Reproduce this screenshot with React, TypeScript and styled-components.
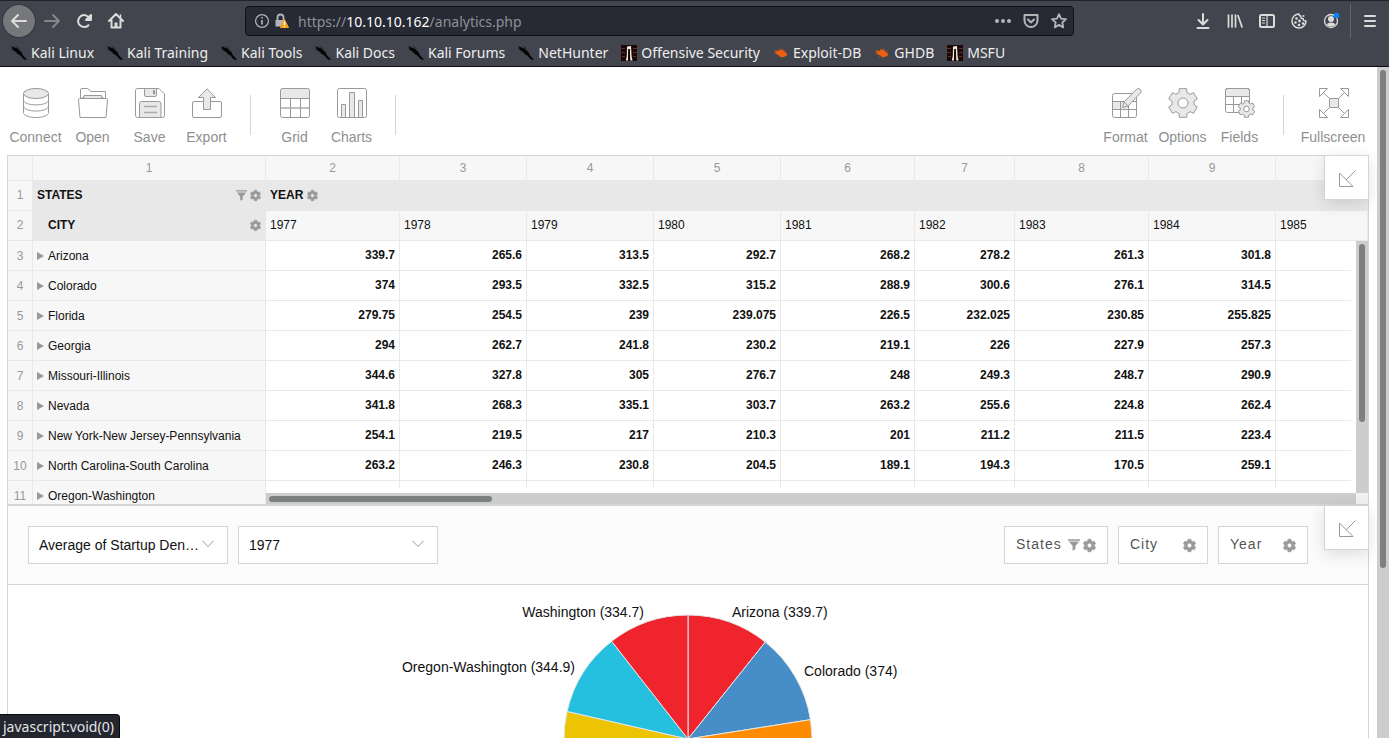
import React from "react";
import styled, { createGlobalStyle, css } from "styled-components";

const GlobalStyle = createGlobalStyle`
  *, *::before, *::after { box-sizing: border-box; }
  body { margin: 0; background: #fff; font-family: "Liberation Sans", Arial, sans-serif; color: #111; }
  button, select { font: inherit; color: inherit; margin: 0; padding: 0; background: none; border: 0; cursor: pointer; }
  svg { display: block; flex: none; overflow: visible; }
`;

/* ---------- browser window ---------- */

const Window = styled.div`
  display: flex;
  flex-direction: column;
  height: 100vh;
  overflow: hidden;
`;

const Chrome = styled.header`
  flex: none;
  height: 67px;
  background: #42454d;
  border-top: 1px solid #22232b;
  border-bottom: 1px solid #0c0c0d;
  color: #eee;
  font-family: "Noto Sans", sans-serif;
  font-size: 14px;
`;

const NavBar = styled.div`
  display: flex;
  align-items: center;
  height: 40px;
`;

const IconButton = styled.button<{ $dim?: boolean }>`
  display: flex;
  align-items: center;
  justify-content: center;
  width: 32px;
  height: 32px;
  color: ${(p) => (p.$dim ? "#85878c" : "#dcdcdb")};
`;

const BackButton = styled(IconButton)`
  margin: 0 1px 0 3px;
  border-radius: 50%;
  background: #75777b;
  box-shadow: 0 0 0 1px #33353b;
`;

const UrlBar = styled.div`
  display: flex;
  align-items: center;
  flex: 1;
  height: 30px;
  margin: 0 113px;
  padding: 0 0 0 8px;
  background: #272934;
  border: 1px solid #0f1015;
  border-radius: 4px;
  color: #b4b5b8;
`;

const UrlText = styled.div`
  flex: 1;
  margin-left: 12px;
  color: #8f9095;
  white-space: nowrap;
  outline: none;
  strong { color: #fff; font-weight: 400; }
`;

const UrlAction = styled(IconButton)`
  width: 28px;
  color: #b4b5b8;
`;

const NavActions = styled.div`
  display: flex;
  align-items: center;
`;

const MenuCell = styled.div`
  height: 34px;
  margin-left: 3px;
  padding: 1px 3px 0;
  border-left: 1px solid #63656b;
`;

const Bookmarks = styled.nav`
  display: flex;
  align-items: center;
  gap: 13px;
  height: 24px;
  padding-left: 11px;
`;

const Bookmark = styled.a`
  display: flex;
  align-items: center;
  gap: 4px;
  color: #eee;
  text-decoration: none;
  white-space: nowrap;
  line-height: 20px;
`;

const Status = styled.div`
  position: fixed;
  left: 0;
  bottom: 0;
  height: 24px;
  padding: 0 5px 0 3px;
  background: #23252f;
  border: 1px solid #0a0a0c;
  border-width: 1px 1px 0 0;
  border-top-right-radius: 4px;
  color: #e4e4e6;
  font: 14px/24px "Noto Sans", sans-serif;
`;

const Viewport = styled.div`
  display: flex;
  flex: 1;
  min-height: 0;
`;

const Page = styled.main`
  flex: 1;
  min-width: 0;
  overflow: hidden;
  padding: 0 8px 0 7px;
`;

const PageScroll = styled.div`
  flex: none;
  width: 12px;
  padding: 3px;
  background: #cdcdcd;
`;

const Thumb = styled.div<{ $w: string; $h: string }>`
  width: ${(p) => p.$w};
  height: ${(p) => p.$h};
  border-radius: 3px;
  background: #7d8080;
`;

/* ---------- pivot toolbar ---------- */

const Toolbar = styled.div`
  display: flex;
  justify-content: space-between;
  height: 88px;
  padding: 21px 2px 0 0;
`;

const ToolGroup = styled.div`
  display: flex;
`;

const Tool = styled.button<{ $wide?: boolean }>`
  display: flex;
  flex-direction: column;
  align-items: center;
  gap: 11px;
  width: ${(p) => (p.$wide ? 68 : 57)}px;
  height: 60px;
  color: #8f8f8f;
  font-size: 14px;
  line-height: 16px;
`;

const Divider = styled.div`
  width: 1px;
  height: 40px;
  margin: 7px 15px 0;
  background: #d5d5d5;
`;

/* ---------- pivot grid ---------- */

const Panel = styled.section`
  position: relative;
  border: 1px solid #d5d5d5;
`;

const GridPanel = styled(Panel)`
  height: 350px;
`;

const GridClip = styled.div`
  height: 100%;
  overflow: hidden;
`;

const Table = styled.table`
  width: 100%;
  table-layout: fixed;
  border-collapse: separate;
  border-spacing: 0;
  font-size: 12px;
  line-height: 14px;
`;

const cell = css`
  height: 30px;
  padding: 0 4px 2px;
  border: solid #e9e9e9;
  border-width: 0 1px 1px 0;
  font-weight: 400;
  text-align: left;
  white-space: nowrap;
`;

const ColNumber = styled.th`
  ${cell}
  height: 25px;
  padding: 0;
  background: #f7f7f7;
  color: #999;
  text-align: center;
`;

const RowNumber = styled.th`
  ${cell}
  padding: 0;
  background: #f7f7f7;
  color: #999;
  text-align: center;
  thead & { padding-bottom: 2px; }
`;

const FieldHead = styled.th`
  ${cell}
  background: #e8e8e8;
  border-color: #e8e8e8;
  font-weight: 700;
`;

const FieldRow = styled.div<{ $indent?: boolean; $spread?: boolean }>`
  display: flex;
  align-items: center;
  justify-content: ${(p) => (p.$spread ? "space-between" : "flex-start")};
  gap: 4px;
  padding-left: ${(p) => (p.$indent ? 11 : 0)}px;
`;

const IconPair = styled.span`
  display: flex;
  align-items: center;
  gap: 3px;
  padding-top: 2px;
  color: #999;
  button { display: block; }
`;

const YearHead = styled.th`
  ${cell}
  background: #f7f7f7;
`;

const StateHead = styled.th`
  ${cell}
  padding: 1px 4px 0;
  background: #f7f7f7;
`;

const Expand = styled.button`
  width: 7px;
  height: 8px;
  margin-right: 4px;
  background: #999;
  clip-path: polygon(0 0, 100% 50%, 0 100%);
`;

const Value = styled.td`
  ${cell}
  background: #fff;
  font-weight: 700;
  text-align: right;
`;

const VScroll = styled.div`
  position: absolute;
  top: 85px;
  right: 0;
  bottom: 11px;
  width: 17px;
  padding: 3px;
  border-left: 5px solid #fff;
  background: #cdcdcd;
`;

const HScroll = styled.div`
  position: absolute;
  left: 258px;
  right: 0;
  bottom: 0;
  height: 16px;
  padding: 3px;
  border-top: 5px solid #fff;
  background: linear-gradient(to left, #f2f1ef 12px, #cdcdcd 12px);
`;

const Minimize = styled.button`
  position: absolute;
  top: -1px;
  right: -1px;
  display: flex;
  align-items: center;
  justify-content: center;
  width: 45px;
  height: 45px;
  padding: 2px 0 0 2px;
  background: #fff;
  border: 1px solid #d5d5d5;
  box-shadow: 0 4px 16px rgba(0, 0, 0, 0.12);
`;

/* ---------- chart ---------- */

const ChartBar = styled.div`
  display: flex;
  justify-content: space-between;
  height: 79px;
  padding: 20px 60px 20px 20px;
  background: #fbfbfb;
  border-bottom: 1px solid #d5d5d5;
`;

const Controls = styled.div`
  display: flex;
  gap: 10px;
`;

const SelectBox = styled.label`
  position: relative;
  width: 200px;
  height: 38px;
  svg { position: absolute; right: 14px; top: 14px; pointer-events: none; }
`;

const Select = styled.select`
  appearance: none;
  width: 100%;
  height: 100%;
  padding: 0 25px 0 10px;
  border: 1px solid #d5d5d5;
  background: #fff;
  font-size: 14px;
  text-overflow: ellipsis;
  white-space: nowrap;
  overflow: hidden;
`;

const FieldButton = styled.button<{ $w: number }>`
  display: flex;
  align-items: center;
  justify-content: space-between;
  width: ${(p) => p.$w}px;
  height: 38px;
  padding: 0 11px 2px;
  background: #fff;
  border: 1px solid #d5d5d5;
  color: #555;
  font-size: 14px;
  letter-spacing: 1px;
`;

const ChartSvg = styled.svg`
  margin: 0 auto;
  font-size: 14px;
`;

/* ---------- icons ---------- */

const Nav = ({ children, w = 16 }: { children: React.ReactNode; w?: number }) => (
  <svg width={w} height={w} viewBox="0 0 16 16" fill="none" stroke="currentColor" strokeWidth="2" strokeLinecap="round" strokeLinejoin="round">
    {children}
  </svg>
);

const gearPath = (cx: number, cy: number, outer: number, inner: number, hole: number) => {
  const pts: string[] = [];
  for (let i = 0; i < 6; i++) {
    const mid = (i * 60 - 90) * (Math.PI / 180);
    [[-0.36, inner], [-0.25, outer], [0.25, outer], [0.36, inner]].forEach(([a, r]) => {
      pts.push(`${(cx + r * Math.cos(mid + a)).toFixed(2)} ${(cy + r * Math.sin(mid + a)).toFixed(2)}`);
    });
  }
  return `M${pts.join("L")}ZM${cx + hole} ${cy}a${hole} ${hole} 0 1 0 ${-2 * hole} 0a${hole} ${hole} 0 1 0 ${2 * hole} 0Z`;
};

const Gear = ({ size = 11 }: { size?: number }) => (
  <svg width={size} height={size} viewBox="0 0 12 12">
    <path d={gearPath(6, 6, 6, 4.6, 2)} fill="currentColor" stroke="currentColor" strokeWidth=".4" strokeLinejoin="round" fillRule="evenodd" />
  </svg>
);

const Filter = ({ size = 11 }: { size?: number }) => (
  <svg width={size} height={size} viewBox="0 0 11 11" fill="currentColor">
    <path d="M0 .3h11v1.3H0zM.8 2.4h9.4L6.8 6.4v3L4.2 10.8V6.4z" />
  </svg>
);

const KaliIcon = () => (
  <svg width="16" height="16" viewBox="0 0 16 16">
    <path d="M0 1l3 1.2L4.500 3 7 3.500l1.500 2L10.500 7l1.300 3L14 12.500l2 2-1.600.6-2.600-1.600L9.500 10.500 7 9.200 5 7 2.600 5.500 0 3.500l1.800.3z" fill="#050505" />
    <path d="M4 1.500l3 1.500M5 .8l4 2.800" stroke="#222" strokeWidth=".5" />
  </svg>
);

const OffsecIcon = () => (
  <svg width="16" height="16" viewBox="0 0 16 16">
    <path d="M0 0h16v16H0z" fill="#1a0706" />
    <path d="M0 3h4v1H0zM0 7h4v1H0zM1 11h3v1H1zM12 3h4v1h-4zM12 7h4v1h-4zM12 11h3v1h-3z" fill="#57302c" />
    <path d="M6 1.500l4-.5.6 10 .9 4.500H9.300L8.800 4H7.300L7 15.500H4.800l1-4.500z" fill="#eee8e0" />
    <path d="M7.500 4h1.200v11H7.200z" fill="#130505" />
  </svg>
);

const BugIcon = () => (
  <svg width="16" height="16" viewBox="0 0 16 16">
    <path d="M2 5l3 1 2-1.500 3 .5 2 2 2 1.500-.3 2-2.700 1.500L8 12 5 10 3 9z" fill="#ec5f12" />
    <path d="M1 5.500l4 1.500M.5 8l4 .5M6 3.500l1 2M9 3l1 2.500M5 12l2-2M8 13.500l1-2M12 5l1.500 1" stroke="#c4551c" strokeWidth=".6" />
  </svg>
);

const ToolSvg = ({ children }: { children: React.ReactNode }) => (
  <svg width="31" height="30" viewBox="-1 0 31 30" fill="none" stroke="#999" strokeLinejoin="round">
    {children}
  </svg>
);

const SHADE = "#e8e8e8";

const toolIcons: Record<string, React.ReactNode> = {
  Connect: (
    <>
      <path d="M2.500 5.500V24.500C2.500 31.200 27.500 31.200 27.500 24.500V5.500M2.500 12C2.500 18.500 27.500 18.500 27.500 12M2.500 18C2.500 24.700 27.500 24.700 27.500 18" fill="#fff" />
      <ellipse cx="15" cy="5.500" rx="12.500" ry="5" fill={SHADE} />
    </>
  ),
  Open: (
    <>
      <path d="M2.500 11V2q0-1.500 1.500-1.500H9.500L13 3.500H27.500V11" />
      <path d="M4.500 11V9.500H6V7.500H23.500V9.500H25V11" fill={SHADE} />
      <path d="M.5 11.500q0-1 1-1h27q1 0 1 1L28 29.500H2z" fill="#fff" />
    </>
  ),
  Save: (
    <>
      <path d="M2.500.5H24L29.500 6V27.500a2 2 0 0 1-2 2h-25a2 2 0 0 1-2-2v-25a2 2 0 0 1 2-2z" />
      <path d="M9.500.5V7q0 1.500 1.500 1.500h9q1.500 0 1.500-1.500V.5z" fill={SHADE} />
      <path d="M18.500 2.500V6h1V2.500z" />
      <path d="M4.500 29.500V15.500q0-2 2-2H24q2 0 2 2v14z" fill={SHADE} />
      <path d="M9 18.500H22M9 24.500H22" strokeWidth="1.500" stroke="#aaa" />
    </>
  ),
  Export: (
    <>
      <path d="M2 13.500H28q1.500 0 1.500 1.500V28q0 1.500-1.500 1.500H2Q.5 29.500.5 28V15q0-1.500 1.500-1.500z" />
      <path d="M15 .8L23.500 9.500H18.500V21.500H11.500V9.500H6.500z" fill={SHADE} />
    </>
  ),
  Grid: (
    <>
      <path d="M.5 10V2.500q0-2 2-2h25q2 0 2 2V10z" fill={SHADE} stroke="none" />
      <path d="M.5 10.500h29M10.500 10.500v19M20.500 10.500v19" />
      <path d="M.5 20h29" strokeWidth="1.500" stroke="#aaa" />
      <rect x=".5" y=".5" width="29" height="29" rx="2" />
    </>
  ),
  Charts: (
    <>
      <path d="M4.500 29.500v-13h4v13M12.500 29.500v-25h5v25M21.500 29.500v-17h4v17" fill={SHADE} />
      <rect x=".5" y=".5" width="29" height="29" rx="2" />
    </>
  ),
  Format: (
    <>
      <path d="M1.500 13.500h16v8h-16z" fill={SHADE} />
      <rect x="1.500" y="5.500" width="24" height="24" rx="2" />
      <path d="M1.500 13.500h24M1.500 21.500h24M9.500 13.500v16M17.500 13.500v16" />
      <path d="M11.500 19.500L13 14 25.500 1.400q2-1.800 3.800 0t0 3.800L17 18z" fill={SHADE} />
      <path d="M13 14l4 4" />
    </>
  ),
  Options: <path d={gearPath(15, 15, 14.8, 11.2, 5)} fill={SHADE} fillRule="evenodd" />,
  Fields: (
    <>
      <path d="M.5 8.500v-6q0-2 2-2h20q2 0 2 2v6z" fill={SHADE} />
      <rect x=".5" y=".5" width="24" height="24" rx="2" />
      <path d="M.5 8.500h24M.5 16.500h24M8.500 8.500v16M16.500 8.500v16" />
      <circle cx="21.500" cy="21" r="7" fill="#fff" stroke="none" />
      <path d={gearPath(21.5, 21, 8.5, 6.4, 2.8)} fill={SHADE} fillRule="evenodd" />
    </>
  ),
  Fullscreen: (
    <>
      <path d="M4.500 4.500L10.500 10.500M25.500 4.500L19.500 10.500M4.500 25.500l6-6M25.500 25.500l-6-6" />
      <path d="M.5.5h8l-8 8zM29.500.5h-8l8 8zM.5 29.500h8l-8-8zM29.500 29.500h-8l8-8z" fill="#fff" />
      <path d="M10.500 10.500h9v9h-9z" fill={SHADE} />
    </>
  ),
};

const MinimizeIcon = () => (
  <svg width="17" height="17" viewBox="0 0 17 17" fill="none" stroke="#999">
    <path d="M.5 3V16.500H14zM7.300 9.700L16.500 .5" />
  </svg>
);

const Chevron = () => (
  <svg width="12" height="8" viewBox="0 0 12 8" fill="none" stroke="#999">
    <path d="M.5 .8L6 6.500 11.500 .8" />
  </svg>
);

/* ---------- data ---------- */

const bookmarks: [string, React.FC][] = [
  ["Kali Linux", KaliIcon],
  ["Kali Training", KaliIcon],
  ["Kali Tools", KaliIcon],
  ["Kali Docs", KaliIcon],
  ["Kali Forums", KaliIcon],
  ["NetHunter", KaliIcon],
  ["Offensive Security", OffsecIcon],
  ["Exploit-DB", BugIcon],
  ["GHDB", BugIcon],
  ["MSFU", OffsecIcon],
];

const columnWidths = [25, 233, 134, 127, 127, 127, 134, 100, 134, 127];
const years = [1977, 1978, 1979, 1980, 1981, 1982, 1983, 1984, 1985];

const rows: [string, number[]][] = [
  ["Arizona", [339.7, 265.6, 313.5, 292.7, 268.2, 278.2, 261.3, 301.8]],
  ["Colorado", [374, 293.5, 332.5, 315.2, 288.9, 300.6, 276.1, 314.5]],
  ["Florida", [279.75, 254.5, 239, 239.075, 226.5, 232.025, 230.85, 255.825]],
  ["Georgia", [294, 262.7, 241.8, 230.2, 219.1, 226, 227.9, 257.3]],
  ["Missouri-Illinois", [344.6, 327.8, 305, 276.7, 248, 249.3, 248.7, 290.9]],
  ["Nevada", [341.8, 268.3, 335.1, 303.7, 263.2, 255.6, 224.8, 262.4]],
  ["New York-New Jersey-Pennsylvania", [254.1, 219.5, 217, 210.3, 201, 211.2, 211.5, 223.4]],
  ["North Carolina-South Carolina", [263.2, 246.3, 230.8, 204.5, 189.1, 194.3, 170.5, 259.1]],
  ["Oregon-Washington", []],
];

const slices: [number, string][] = [
  [339.7, "#ef242d"],
  [374, "#478ec9"],
  [279.75, "#ff8c00"],
  [294, "#8bc34a"],
  [344.6, "#9c5bb5"],
  [341.8, "#3aa99f"],
  [254.1, "#e0679b"],
  [263.2, "#edc404"],
  [344.9, "#25c0df"],
  [334.7, "#ef242d"],
];

const Pie = () => {
  const total = slices.reduce((sum, [v]) => sum + v, 0);
  const cx = 280;
  const cy = 154;
  const r = 124;
  let angle = 0;
  return (
    <ChartSvg width="560" height="300" viewBox="0 0 560 300" role="img" aria-label="Average of Startup Density by state">
      {slices.map(([value, color], i) => {
        const start = angle;
        angle += (value / total) * Math.PI * 2;
        const at = (a: number) => `${cx + r * Math.sin(a)} ${cy - r * Math.cos(a)}`;
        return <path key={i} d={`M${cx} ${cy}L${at(start)}A${r} ${r} 0 0 1 ${at(angle)}Z`} fill={color} stroke="#e6e6e6" strokeWidth="1" />;
      })}
      <g fill="#111">
        <text x="236" y="32" textAnchor="end">Washington (334.7)</text>
        <text x="324" y="32">Arizona (339.7)</text>
        <text x="167" y="87" textAnchor="end">Oregon-Washington (344.9)</text>
        <text x="396" y="91">Colorado (374)</text>
      </g>
    </ChartSvg>
  );
};

const Tools = ({ names }: { names: string[] }) => (
  <>
    {names.map((name) => (
      <Tool key={name} $wide={name === "Fullscreen"}>
        <ToolSvg>{toolIcons[name]}</ToolSvg>
        {name}
      </Tool>
    ))}
  </>
);

export default function App() {
  return (
    <Window>
      <GlobalStyle />
      <Chrome>
        <NavBar>
          <BackButton aria-label="Back">
            <Nav><path d="M15 8H1.500M7 2L1 8l6 6" /></Nav>
          </BackButton>
          <IconButton $dim aria-label="Forward">
            <Nav><path d="M1 8h13.500M9 2l6 6-6 6" /></Nav>
          </IconButton>
          <IconButton aria-label="Reload">
            <Nav>
              <path d="M13.500 5.500A6 6 0 1 0 12.500 12.200" />
              <path d="M15 2v5h-5z" fill="currentColor" />
            </Nav>
          </IconButton>
          <IconButton aria-label="Home">
            <Nav>
              <path d="M1 8l7-7 7 7M3.500 7v7.500h9V7" />
              <path d="M6.500 9.500h3v5h-3z" fill="currentColor" stroke="none" />
              <path d="M12.500 2v3" strokeWidth="1.500" />
            </Nav>
          </IconButton>
          <UrlBar>
            <svg width="16" height="16" viewBox="0 0 16 16" fill="none" stroke="currentColor" strokeWidth="1.200">
              <circle cx="8" cy="8" r="6.400" />
              <path d="M8 7v4.500M8 4v1.600" strokeWidth="1.600" />
            </svg>
            <svg width="16" height="16" viewBox="0 0 16 16">
              <g transform="translate(5 0)">
                <path d="M2.500 7V4.500a3 3 0 0 1 6 0V7" fill="none" stroke="currentColor" strokeWidth="1.800" />
                <path d="M.5 7h9v6.500h-9z" fill="currentColor" />
                <path d="M9.500 6.500L13.500 14.500H5.500z" fill="#f9a01b" stroke="#f9a01b" strokeLinejoin="round" />
                <path d="M9.500 8.500v3.500M9.500 13v1.200" stroke="#fff" strokeWidth="1.300" />
              </g>
            </svg>
            <UrlText role="textbox" aria-label="Address" contentEditable suppressContentEditableWarning spellCheck={false}>
              https://<strong>10.10.10.162</strong>/analytics.php
            </UrlText>
            <UrlAction aria-label="Page actions">
              <Nav>
                <g fill="currentColor" stroke="none"><circle cx="2" cy="8" r="2" /><circle cx="8" cy="8" r="2" /><circle cx="14" cy="8" r="2" /></g>
              </Nav>
            </UrlAction>
            <UrlAction aria-label="Save to Pocket">
              <Nav><path d="M1.500 2h13v5.500a6.500 6.500 0 0 1-13 0z" /><path d="M5 6.500l3 3 3-3" /></Nav>
            </UrlAction>
            <UrlAction aria-label="Bookmark this page">
              <Nav><path d="M8 1.200l2 4.500 5 .5-3.700 3.300 1 4.900L8 11.900l-4.300 2.500 1-4.900L1 6.200l5-.5z" strokeWidth="1.800" /></Nav>
            </UrlAction>
          </UrlBar>
          <NavActions>
            <IconButton aria-label="Downloads">
              <Nav><path d="M8 1v10M3.500 7L8 11.500 12.500 7M2.500 15h11" /></Nav>
            </IconButton>
            <IconButton aria-label="Library">
              <Nav><path d="M1.500 2v12M5 2v12M8.500 2v12" strokeWidth="1.700" /><path d="M11 2.500L15 14" strokeWidth="1.700" /></Nav>
            </IconButton>
            <IconButton aria-label="Sidebars">
              <Nav><rect x="1" y="2" width="14" height="12" rx="1.500" /><path d="M8 2v12M3.500 5h2M3.500 7.500h2M3.500 10h2" strokeWidth="1.200" /></Nav>
            </IconButton>
            <IconButton aria-label="Cookie editor">
              <Nav>
                <path d="M8 1a7 7 0 1 0 7 7c-2 .3-3-.8-2.700-2.300C10.500 5.800 9.300 4.600 9.800 3 8.500 3 7.800 2 8 1z" strokeWidth="1.500" />
                <g fill="currentColor" stroke="none"><circle cx="5.500" cy="5.500" r="1.300" /><circle cx="4.500" cy="9.500" r="1.300" /><circle cx="8.500" cy="8" r="1.400" /><circle cx="8" cy="12" r="1.300" /><circle cx="12" cy="10.500" r="1.300" /><circle cx="12.500" cy="3" r="1" /></g>
              </Nav>
            </IconButton>
            <IconButton aria-label="Account">
              <Nav>
                <circle cx="8" cy="8" r="6.500" strokeWidth="1.300" />
                <g fill="currentColor" stroke="none"><circle cx="8" cy="6" r="3" /><path d="M3.500 11.500q1-2 4.500-2t4.500 2Q11 13.500 8 13.500t-4.500-2z" /></g>
                <circle cx="13.500" cy="2.500" r="2.800" fill="#0a84ff" stroke="none" />
              </Nav>
            </IconButton>
            <MenuCell>
              <IconButton aria-label="Menu">
                <Nav><path d="M3 3h10M3 8h10M3 13h10" /></Nav>
              </IconButton>
            </MenuCell>
          </NavActions>
        </NavBar>
        <Bookmarks aria-label="Bookmarks">
          {bookmarks.map(([name, Icon]) => (
            <Bookmark key={name} href="#"><Icon />{name}</Bookmark>
          ))}
        </Bookmarks>
      </Chrome>

      <Viewport>
        <Page>
          <Toolbar>
            <ToolGroup>
              <Tools names={["Connect", "Open", "Save", "Export"]} />
              <Divider />
              <Tools names={["Grid", "Charts"]} />
              <Divider />
            </ToolGroup>
            <ToolGroup>
              <Tools names={["Format", "Options", "Fields"]} />
              <Divider />
              <Tools names={["Fullscreen"]} />
            </ToolGroup>
          </Toolbar>

          <GridPanel>
            <GridClip>
              <Table>
                <colgroup>
                  {columnWidths.map((w, i) => <col key={i} width={w} />)}
                  <col />
                </colgroup>
                <thead>
                  <tr>
                    {["", 1, 2, 3, 4, 5, 6, 7, 8, 9, ""].map((n, i) => <ColNumber key={i}>{n}</ColNumber>)}
                  </tr>
                  <tr>
                    <RowNumber>1</RowNumber>
                    <FieldHead>
                      <FieldRow $spread>
                        STATES
                        <IconPair>
                          <button aria-label="Filter states"><Filter /></button>
                          <button aria-label="States settings"><Gear /></button>
                        </IconPair>
                      </FieldRow>
                    </FieldHead>
                    <FieldHead colSpan={9}>
                      <FieldRow>
                        YEAR
                        <IconPair><button aria-label="Year settings"><Gear /></button></IconPair>
                      </FieldRow>
                    </FieldHead>
                  </tr>
                  <tr>
                    <RowNumber>2</RowNumber>
                    <FieldHead>
                      <FieldRow $indent $spread>
                        CITY
                        <IconPair><button aria-label="City settings"><Gear /></button></IconPair>
                      </FieldRow>
                    </FieldHead>
                    {years.map((y) => <YearHead key={y}>{y}</YearHead>)}
                  </tr>
                </thead>
                <tbody>
                  {rows.map(([name, values], i) => (
                    <tr key={name}>
                      <RowNumber>{i + 3}</RowNumber>
                      <StateHead scope="row"><Expand aria-label={`Expand ${name}`} />{name}</StateHead>
                      {years.map((y, c) => <Value key={y}>{values[c]}</Value>)}
                    </tr>
                  ))}
                </tbody>
              </Table>
            </GridClip>
            <HScroll><Thumb $w="223px" $h="6px" /></HScroll>
            <VScroll><Thumb $w="6px" $h="178px" /></VScroll>
            <Minimize aria-label="Minimize grid"><MinimizeIcon /></Minimize>
          </GridPanel>

          <Panel>
            <ChartBar>
              <Controls>
                <SelectBox>
                  <Select aria-label="Measure"><option>Average of Startup Density</option></Select>
                  <Chevron />
                </SelectBox>
                <SelectBox>
                  <Select aria-label="Year"><option>1977</option></Select>
                  <Chevron />
                </SelectBox>
              </Controls>
              <Controls>
                <FieldButton $w={104}>States<IconPair><Filter size={12} /><Gear size={13} /></IconPair></FieldButton>
                <FieldButton $w={90}>City<IconPair><Gear size={13} /></IconPair></FieldButton>
                <FieldButton $w={90}>Year<IconPair><Gear size={13} /></IconPair></FieldButton>
              </Controls>
            </ChartBar>
            <Pie />
            <Minimize aria-label="Minimize chart"><MinimizeIcon /></Minimize>
          </Panel>
        </Page>
        <PageScroll><Thumb $w="6px" $h="498px" /></PageScroll>
      </Viewport>
      <Status>javascript:void(0)</Status>
    </Window>
  );
}
